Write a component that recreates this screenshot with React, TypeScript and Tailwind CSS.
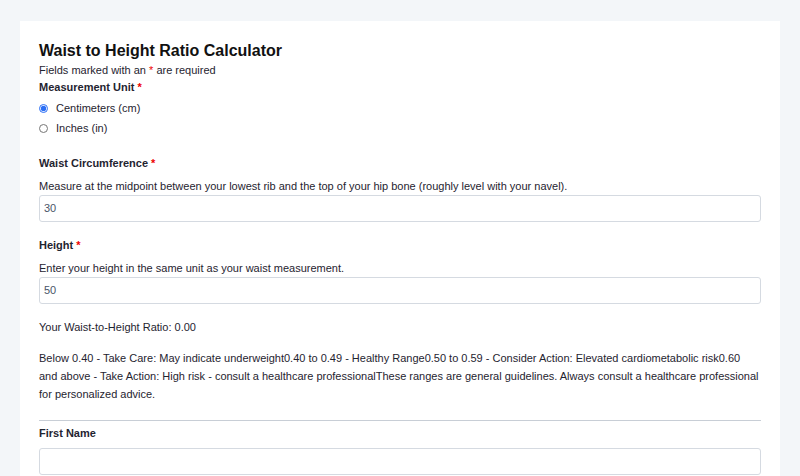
export default function App() {
  const f = { fontFamily: "'Liberation Sans', Arial, sans-serif" };
  const Star = () => <span className="text-[#e00]"> *</span>;
  return (
    <div style={f} className="w-[800px] h-[476px] overflow-hidden bg-[#f3f6f9] pt-[21px] px-[20px] text-[#1f2430]">
      <div className="bg-white h-[600px] px-[19px] pt-[19px] text-[11px]">
        <h1 className="text-[16px] font-bold leading-[22px] text-[#111]">Waist to Height Ratio Calculator</h1>
        <p className="leading-[16px]">Fields marked with an <span className="text-[#e00]">*</span> are required</p>
        <p className="font-bold leading-[16px] mt-[1px]">Measurement Unit<Star /></p>
        <label className="flex items-center gap-[8px] mt-[6px] leading-[14px]">
          <input type="radio" name="u" defaultChecked className="w-[9px] h-[9px] m-0 accent-[#2a6ef5]" />Centimeters (cm)
        </label>
        <label className="flex items-center gap-[8px] mt-[6px] leading-[14px]">
          <input type="radio" name="u" className="w-[9px] h-[9px] m-0" />Inches (in)
        </label>
        <p className="font-bold leading-[16px] mt-[20px]">Waist Circumference<Star /></p>
        <p className="leading-[16px] mt-[7px]">Measure at the midpoint between your lowest rib and the top of your hip bone (roughly level with your navel).</p>
        <div className="mt-[1px] h-[27px] border border-[#d5dae1] rounded-[3px] flex items-center px-[4px] text-[#4a5568]">30</div>
        <p className="font-bold leading-[16px] mt-[15px]">Height<Star /></p>
        <p className="leading-[16px] mt-[7px]">Enter your height in the same unit as your waist measurement.</p>
        <div className="mt-[1px] h-[27px] border border-[#d5dae1] rounded-[3px] flex items-center px-[4px] text-[#4a5568]">50</div>
        <p className="leading-[16px] mt-[15px]">Your Waist-to-Height Ratio: 0.00</p>
        <p className="leading-[18px] mt-[14px]">Below 0.40 - Take Care: May indicate underweight0.40 to 0.49 - Healthy Range0.50 to 0.59 - Consider Action: Elevated cardiometabolic risk0.60 and above - Take Action: High risk - consult a healthcare professionalThese ranges are general guidelines. Always consult a healthcare professional for personalized advice.</p>
        <div className="mt-[17px] border-t border-[#c8ced6]" />
        <p className="font-bold leading-[16px] mt-[4px]">First Name</p>
        <div className="mt-[7px] h-[27px] border border-[#d5dae1] rounded-[3px]" />
      </div>
    </div>
  );
}
